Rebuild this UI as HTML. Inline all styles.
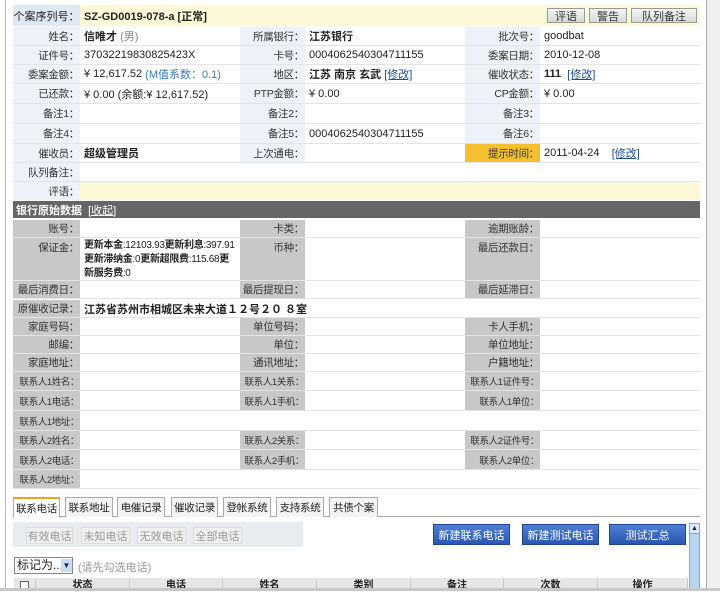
<!DOCTYPE html>
<html><head><meta charset="utf-8"><style>
*{margin:0;padding:0;box-sizing:border-box}
body{width:720px;height:591px;overflow:hidden;background:#fff;font-family:"Liberation Sans","Noto Sans CJK SC",sans-serif;font-size:11px;color:#222;position:relative}
.a{position:absolute}
.r{position:absolute;left:13px;width:687px;display:flex;border-bottom:1px solid #e4e4e4}
.r div{height:100%;display:flex;align-items:center;padding:0 4px;white-space:nowrap;flex-shrink:0}
.l{background:#eef2f8;justify-content:flex-end;color:#333}
.g{background:#c8c8c8;justify-content:flex-end;color:#333}
.r .l,.r .g{padding:0 1px;font-size:10.5px;letter-spacing:-0.3px}
.r .s{font-size:9.5px;letter-spacing:-0.4px}
.w1{width:67px}.w2{width:160px}.w3{width:65px}.w4{width:160px}.w5{width:75px}.w6{width:160px}
b{font-weight:bold}
.lk{color:#1a4f8f;text-decoration:underline}
.btn{position:absolute;top:8px;height:15px;border:1px solid #999;background:linear-gradient(#f6f6f6,#d8d8d8);font-size:11px;display:flex;align-items:center;justify-content:center;color:#333}
.tab{position:absolute;top:497px;height:20px;border:1px solid #aaa;border-bottom:none;background:#f4f4f4;display:flex;align-items:center;justify-content:center;font-size:10.5px;letter-spacing:-0.3px}
.sb{position:absolute;top:527px;height:17px;border:1px solid #ddd;background:#f0f0f0;color:#999;display:flex;align-items:center;justify-content:center;font-size:11px}
.bb{position:absolute;top:524px;height:21px;background:linear-gradient(#4f7fd4,#2a56b0);border:1px solid #1f4590;color:#fff;display:flex;align-items:center;justify-content:center;font-size:11px}
.th{position:absolute;top:578px;height:13px;background:#e6e6e6;border-right:1px solid #ccc;font-weight:bold;text-align:center;font-size:10px;line-height:16px}
</style></head><body>
<div class="a" style="left:5px;top:0;width:1px;height:591px;background:#bbb"></div>
<div class="a" style="left:706px;top:0;width:14px;height:591px;background:#f0f0f0;border-left:1px solid #aaa"></div>

<div class="a" style="left:13px;top:5px;width:687px;height:21px;background:#fdf8d8"></div>
<div class="a" style="left:13px;top:5px;width:67px;height:21px;background:#dfe8f4;display:flex;align-items:center;justify-content:center;white-space:nowrap">个案序列号：</div>
<div class="a" style="left:84px;top:5px;height:21px;display:flex;align-items:center"><b>SZ-GD0019-078-a [正常]</b></div>
<div class="btn" style="left:547px;width:38px">评语</div>
<div class="btn" style="left:589px;width:38px">警告</div>
<div class="btn" style="left:631px;width:66px">队列备注</div>

<div class="r" style="top:27px;height:19px"><div class="l w1">姓名：</div><div class="w2"><b>信唯才</b>&nbsp;<span style="color:#888">(男)</span></div><div class="l w3">所属银行：</div><div class="w4"><b>江苏银行</b></div><div class="l w5">批次号：</div><div class="w6">goodbat</div></div>
<div class="r" style="top:46px;height:19px"><div class="l w1">证件号：</div><div class="w2">37032219830825423X</div><div class="l w3">卡号：</div><div class="w4">0004062540304711155</div><div class="l w5">委案日期：</div><div class="w6">2010-12-08</div></div>
<div class="r" style="top:65px;height:19px"><div class="l w1">委案金额：</div><div class="w2">¥ 12,617.52&nbsp;<span style="color:#3a7ab8">(M值系数：0.1)</span></div><div class="l w3">地区：</div><div class="w4"><b>江苏 南京 玄武</b>&nbsp;<span class="lk">[修改]</span></div><div class="l w5">催收状态：</div><div class="w6"><b>111</b>&nbsp;&nbsp;<span class="lk">[修改]</span></div></div>
<div class="r" style="top:84px;height:20px"><div class="l w1">已还款：</div><div class="w2">¥ 0.00&nbsp;(余额:¥ 12,617.52)</div><div class="l w3">PTP金额：</div><div class="w4">¥ 0.00</div><div class="l w5">CP金额：</div><div class="w6">¥ 0.00</div></div>
<div class="r" style="top:104px;height:20px"><div class="l w1">备注1：</div><div class="w2"></div><div class="l w3">备注2：</div><div class="w4"></div><div class="l w5">备注3：</div><div class="w6"></div></div>
<div class="r" style="top:124px;height:20px"><div class="l w1">备注4：</div><div class="w2"></div><div class="l w3">备注5：</div><div class="w4">0004062540304711155</div><div class="l w5">备注6：</div><div class="w6"></div></div>
<div class="r" style="top:144px;height:19px"><div class="l w1">催收员：</div><div class="w2"><b>超级管理员</b></div><div class="l w3">上次通电：</div><div class="w4"></div><div class="l w5" style="background:#f5c030">提示时间：</div><div class="w6">2011-04-24&nbsp;&nbsp;&nbsp;&nbsp;<span class="lk">[修改]</span></div></div>
<div class="r" style="top:163px;height:19px"><div class="l w1">队列备注：</div><div style="width:620px"></div></div>
<div class="r" style="top:182px;height:18px;border:none"><div class="l w1">评语：</div><div style="width:620px;background:#fdf8d8"></div></div>

<div class="a" style="left:13px;top:201px;width:687px;height:17px;background:#666;color:#fff;display:flex;align-items:center;padding-left:3px"><b>银行原始数据</b>&nbsp;&nbsp;<span style="text-decoration:underline">[收起]</span></div>
<div class="r" style="top:220px;height:18px"><div class="g w1">账号：</div><div class="w2"></div><div class="g w3">卡类：</div><div class="w4"></div><div class="g w5">逾期账龄：</div><div class="w6"></div></div>
<div class="r" style="top:238px;height:43px"><div class="g w1" style="align-items:flex-start;padding-top:2px">保证金：</div><div class="w2" style="font-size:10px;line-height:14px;align-items:flex-start;padding:1px 2px 0 4px;letter-spacing:-0.3px"><span><b>更新本金</b>:12103.93<b>更新利息</b>:397.91<br><b>更新滞纳金</b>:0<b>更新超限费</b>:115.68<b>更</b><br><b>新服务费</b>:0</span></div><div class="g w3" style="align-items:flex-start;padding-top:2px">币种：</div><div class="w4"></div><div class="g w5" style="align-items:flex-start;padding-top:2px">最后还款日：</div><div class="w6"></div></div>
<div class="r" style="top:281px;height:18px"><div class="g w1">最后消费日：</div><div class="w2"></div><div class="g w3">最后提现日：</div><div class="w4"></div><div class="g w5">最后延滞日：</div><div class="w6"></div></div>
<div class="r" style="top:300px;height:18px"><div class="g w1">原催收记录：</div><div style="width:620px"><b>江苏省苏州市相城区未来大道１２号２０ ８室</b></div></div>
<div class="r" style="top:318px;height:18px"><div class="g w1">家庭号码：</div><div class="w2"></div><div class="g w3">单位号码：</div><div class="w4"></div><div class="g w5">卡人手机：</div><div class="w6"></div></div>
<div class="r" style="top:336px;height:18px"><div class="g w1">邮编：</div><div class="w2"></div><div class="g w3">单位：</div><div class="w4"></div><div class="g w5">单位地址：</div><div class="w6"></div></div>
<div class="r" style="top:354px;height:18px"><div class="g w1">家庭地址：</div><div class="w2"></div><div class="g w3">通讯地址：</div><div class="w4"></div><div class="g w5">户籍地址：</div><div class="w6"></div></div>
<div class="r" style="top:372px;height:19px"><div class="g w1 s">联系人1姓名：</div><div class="w2"></div><div class="g w3 s">联系人1关系：</div><div class="w4"></div><div class="g w5 s">联系人1证件号：</div><div class="w6"></div></div>
<div class="r" style="top:391px;height:20px"><div class="g w1 s">联系人1电话：</div><div class="w2"></div><div class="g w3 s">联系人1手机：</div><div class="w4"></div><div class="g w5 s">联系人1单位：</div><div class="w6"></div></div>
<div class="r" style="top:411px;height:20px"><div class="g w1 s">联系人1地址：</div><div style="width:620px"></div></div>
<div class="r" style="top:431px;height:19px"><div class="g w1 s">联系人2姓名：</div><div class="w2"></div><div class="g w3 s">联系人2关系：</div><div class="w4"></div><div class="g w5 s">联系人2证件号：</div><div class="w6"></div></div>
<div class="r" style="top:450px;height:20px"><div class="g w1 s">联系人2电话：</div><div class="w2"></div><div class="g w3 s">联系人2手机：</div><div class="w4"></div><div class="g w5 s">联系人2单位：</div><div class="w6"></div></div>
<div class="r" style="top:470px;height:19px"><div class="g w1 s">联系人2地址：</div><div style="width:620px"></div></div>

<div class="a" style="left:13px;top:516px;width:687px;height:1px;background:#aaa"></div>
<div class="tab" style="left:13px;width:47px;height:21px;background:#fff;border-top:2px solid #f0a020">联系电话</div>
<div class="tab" style="left:65px;width:48px">联系地址</div>
<div class="tab" style="left:117px;width:48px">电催记录</div>
<div class="tab" style="left:171px;width:47px">催收记录</div>
<div class="tab" style="left:223px;width:48px">登帐系统</div>
<div class="tab" style="left:276px;width:48px">支持系统</div>
<div class="tab" style="left:329px;width:49px">共债个案</div>

<div class="a" style="left:13px;top:522px;width:290px;height:25px;background:#e8ebf0"></div>
<div class="sb" style="left:26px;width:47px">有效电话</div>
<div class="sb" style="left:81px;width:49px">未知电话</div>
<div class="sb" style="left:137px;width:49px">无效电话</div>
<div class="sb" style="left:193px;width:49px">全部电话</div>
<div class="bb" style="left:433px;width:77px">新建联系电话</div>
<div class="bb" style="left:522px;width:77px">新建测试电话</div>
<div class="bb" style="left:609px;width:77px">测试汇总</div>
<div class="a" style="left:689px;top:523px;width:11px;height:68px;background:#b8d4f0;border:1px solid #8ab"></div>
<div class="a" style="left:689px;top:523px;width:11px;height:11px;background:#dbe9f8;border:1px solid #8ab;font-size:7px;text-align:center;line-height:9px">▲</div>

<div class="a" style="left:14px;top:557px;width:59px;height:17px;border:1px solid #888;font-size:12px;line-height:15px;padding-left:2px;white-space:nowrap;overflow:hidden">标记为...</div>
<div class="a" style="left:61px;top:559px;width:11px;height:13px;background:#c9dcf4;font-size:8px;text-align:center;line-height:13px;color:#224">▼</div>
<div class="a" style="left:78px;top:559px;color:#999;font-size:11px">(请先勾选电话)</div>

<div class="th" style="left:14px;width:22px"><span style="display:inline-block;width:9px;height:9px;border:1px solid #666;background:#fff;margin-top:3px"></span></div>
<div class="th" style="left:36px;width:94px">状态</div>
<div class="th" style="left:130px;width:93px">电话</div>
<div class="th" style="left:223px;width:94px">姓名</div>
<div class="th" style="left:317px;width:94px">类别</div>
<div class="th" style="left:411px;width:93px">备注</div>
<div class="th" style="left:504px;width:94px">次数</div>
<div class="th" style="left:598px;width:90px">操作</div>
<div class="a" style="left:0;top:588px;width:720px;height:3px;background:#c8c8c8"></div>
</body></html>
